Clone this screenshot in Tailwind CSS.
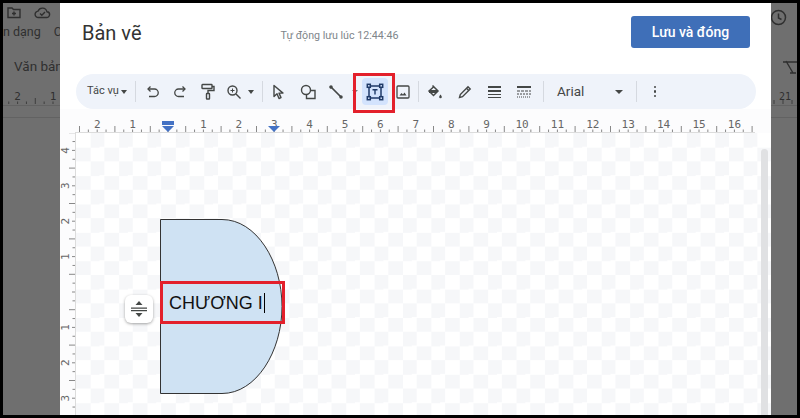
<!DOCTYPE html>
<html lang="en">
<head>
    <meta charset="UTF-8">
    <meta name="viewport" content="width=device-width, initial-scale=1.0">
    <title>Bản vẽ</title>
    <script src="https://cdn.jsdelivr.net/npm/@tailwindcss/browser@4"></script>
</head>
<body class="bg-black overflow-hidden font-['Roboto',sans-serif]">
    <div class="w-[800px] h-[418px] pt-[3px] pb-[3px] pl-[3px] pr-[3px] flex">
        <!-- Dimmed document behind the dialog -->
        <div class="w-[57px] shrink-0 bg-[#6f6f6f] text-[#2f2f2f] overflow-hidden flex flex-col">
            <div class="h-[18px] flex items-center gap-[12px] pl-[3px]">
                <svg width="16" height="14" viewBox="0 0 16 14" fill="none" stroke="#2f2f2f" stroke-width="1.4"><path d="M2 3h4l1.500 1.500H14v8H2z"/><path d="M8 6.500v4M6 8.500h4"/></svg>
                <svg width="17" height="13" viewBox="0 0 17 13" fill="none" stroke="#2f2f2f" stroke-width="1.4"><path d="M4.500 11.500a3.200 3.200 0 0 1-.4-6.400 4.600 4.600 0 0 1 8.800.6 2.900 2.900 0 0 1-.4 5.800z"/><path d="M6 7.500l1.800 1.700L11 6"/></svg>
            </div>
            <div class="h-[22px] flex items-center gap-[13px] text-[12.500px] whitespace-nowrap"><span>n dạng</span><span>C</span></div>
            <div class="h-[33px] flex items-end pl-[11px] text-[13.500px] whitespace-nowrap">Văn bản</div>
            <svg width="57" height="29" class="shrink-0" id="bgRulerLeft"></svg>
            <div class="h-[13px] shrink-0 border-t border-b border-[#626262]"></div>
        </div>

        <!-- Dialog -->
        <div class="relative w-[711px] shrink-0 bg-white flex flex-col">
            <div class="h-[71px] flex items-start shrink-0">
                <h1 class="mt-[17px] ml-[22px] text-[20px] leading-[26px] text-[#333]">Bản vẽ</h1>
                <span class="mt-[26px] ml-[139px] text-[10.700px] leading-[14px] text-[#80868b] whitespace-nowrap">Tự động lưu lúc 12:44:46</span>
                <button class="mt-[13px] ml-auto mr-[21px] w-[119px] h-[32px] rounded-[3px] bg-[#3f6fb8] text-white text-[14px] font-medium">Lưu và đóng</button>
            </div>

            <!-- Toolbar -->
            <div class="ml-[16px] w-[680px] h-[35px] shrink-0 rounded-full bg-[#eff3fa] flex items-center text-[#444746]">
                <div class="w-[59px] pl-[11px] flex items-center shrink-0 text-[11px] whitespace-nowrap">Tác vụ<span class="ml-[2px] border-x-[3.500px] border-x-transparent border-t-[4px] border-t-[#444746]"></span></div>
                <div class="w-px h-[21px] bg-[#d5d9e0] shrink-0"></div>
                <div class="w-[34px] flex justify-center shrink-0">
                    <svg width="14" height="14" viewBox="0 0 14 14" fill="none" stroke="#444746" stroke-width="1.300"><path d="M4.500 1.500L2 4l2.500 2.500"/><path d="M2 4h6.500a3 3 0 0 1 0 7.500H3"/></svg>
                </div>
                <div class="w-[20px] flex justify-center shrink-0">
                    <svg width="14" height="14" viewBox="0 0 14 14" fill="none" stroke="#444746" stroke-width="1.300"><path d="M9.500 1.500L12 4 9.500 6.500"/><path d="M12 4H5.500a3 3 0 0 0 0 7.500H11"/></svg>
                </div>
                <div class="w-[36px] flex justify-center shrink-0">
                    <svg width="14" height="17" viewBox="0 0 14 17" fill="none" stroke="#444746" stroke-width="1.400"><rect x="1" y="1.500" width="10" height="4" rx=".5"/><path d="M11 3.500h2v4H7v3"/><rect x="5.500" y="10.500" width="3" height="5.500" rx=".5"/></svg>
                </div>
                <div class="w-[16px] flex justify-center shrink-0">
                    <svg width="16" height="16" viewBox="0 0 16 16" fill="none" stroke="#444746" stroke-width="1.400"><circle cx="6.500" cy="6.500" r="4.500"/><path d="M10 10l4.500 4.500"/><path d="M4.500 6.500h4M6.500 4.500v4" stroke-width="1"/></svg>
                </div>
                <div class="w-[18px] flex justify-center shrink-0"><span class="border-x-[3.500px] border-x-transparent border-t-[4px] border-t-[#444746]"></span></div>
                <div class="w-px h-[21px] bg-[#d5d9e0] shrink-0 ml-[2px]"></div>
                <div class="w-[31px] flex justify-center shrink-0">
                    <svg width="13" height="16" viewBox="0 0 13 16" fill="none" stroke="#444746" stroke-width="1.400" stroke-linejoin="round"><path d="M2 1.500v11l3-2.800 2 4.800 2-.9-2-4.500h4z"/></svg>
                </div>
                <div class="w-[27px] flex justify-center shrink-0">
                    <svg width="16" height="16" viewBox="0 0 16 16" fill="none" stroke="#444746" stroke-width="1.400"><circle cx="6" cy="6" r="4.500"/><path d="M10.500 6.500H15v8H6.500v-4"/></svg>
                </div>
                <div class="w-[29px] flex justify-center shrink-0">
                    <svg width="14" height="14" viewBox="0 0 14 14" fill="none" stroke="#444746" stroke-width="1.700"><path d="M2 2l10 10"/><circle cx="2" cy="2" r=".9" fill="#444746"/><circle cx="12" cy="12" r=".9" fill="#444746"/></svg>
                </div>
                <div class="w-[10px] flex justify-center shrink-0 opacity-70"><span class="border-x-[3px] border-x-transparent border-t-[3px] border-t-[#444746]"></span></div>
                <div class="ml-[2px] w-[26px] h-[27px] rounded-[4px] bg-[#d3e3fd] flex justify-center items-center shrink-0">
                    <svg width="18" height="18" viewBox="0 0 18 18" fill="none" stroke="#1f3a68" stroke-width="1.500"><rect x="3" y="3" width="12" height="12"/><rect x="1.300" y="1.300" width="3" height="3" fill="#d3e3fd"/><rect x="13.700" y="1.300" width="3" height="3" fill="#d3e3fd"/><rect x="1.300" y="13.700" width="3" height="3" fill="#d3e3fd"/><rect x="13.700" y="13.700" width="3" height="3" fill="#d3e3fd"/><path d="M6.500 6.800h5M9 6.800v4.800" stroke-width="1.400"/></svg>
                </div>
                <div class="w-[30px] flex justify-center shrink-0">
                    <svg width="14" height="14" viewBox="0 0 14 14" fill="none" stroke="#444746" stroke-width="1.300"><rect x="1" y="1" width="12" height="12" rx="1"/><path d="M3.500 10.500l2-2.500 1.500 1.500 1.500-2 2 3z" fill="#444746" stroke="none"/></svg>
                </div>
                <div class="w-px h-[21px] bg-[#d5d9e0] shrink-0"></div>
                <div class="w-[31px] flex justify-center shrink-0">
                    <svg width="16" height="16" viewBox="0 0 16 16" fill="none" stroke="#444746" stroke-width="1.500"><path d="M5.500 1.500l5.500 5.500-4.500 4.500-4.500-4.500 4.500-4"/><path d="M2 7.500h8" stroke-width="3"/><path d="M13.500 10.500c.9 1.200 1.300 1.900 1.300 2.500a1.300 1.300 0 0 1-2.600 0c0-.6.400-1.300 1.300-2.500z" fill="#444746" stroke="none"/></svg>
                </div>
                <div class="w-[29px] flex justify-center shrink-0">
                    <svg width="14" height="14" viewBox="0 0 14 14" fill="none" stroke="#444746" stroke-width="1.400"><path d="M1.500 12.500l.8-3L10 1.800l2.200 2.200-7.700 7.700z"/><path d="M8.500 3.300l2.200 2.200"/></svg>
                </div>
                <div class="w-[30px] flex flex-col items-center shrink-0 gap-[2px]">
                    <div class="w-[13px] h-[2px] bg-[#444746]"></div><div class="w-[13px] h-[2px] bg-[#444746]"></div><div class="w-[13px] h-[1px] bg-[#444746]"></div><div class="w-[13px] h-[1px] bg-[#444746]"></div>
                </div>
                <div class="w-[29px] flex justify-center shrink-0">
                    <svg width="14" height="12" viewBox="0 0 14 12" fill="none" stroke="#444746"><path d="M0 1h14" stroke-width="2"/><path d="M0 5h14" stroke-width="1" stroke-dasharray="3 1"/><path d="M0 8h14" stroke-width="1" stroke-dasharray="2 1"/><path d="M0 11h14" stroke-width="1" stroke-dasharray="1 1"/></svg>
                </div>
                <div class="w-px h-[21px] bg-[#d5d9e0] shrink-0 ml-[5px]"></div>
                <div class="w-[92px] pl-[13px] pr-[13px] flex items-center justify-between shrink-0 text-[13.500px]">Arial<span class="border-x-[4px] border-x-transparent border-t-[4px] border-t-[#444746]"></span></div>
                <div class="w-px h-[21px] bg-[#d5d9e0] shrink-0"></div>
                <div class="w-[36px] flex flex-col items-center gap-[2px] shrink-0">
                    <div class="size-[2.500px] rounded-full bg-[#444746]"></div><div class="size-[2.500px] rounded-full bg-[#444746]"></div><div class="size-[2.500px] rounded-full bg-[#444746]"></div>
                </div>
            </div>

            <!-- Ruler + canvas -->
            <svg id="rulerTop" width="711" height="24" class="shrink-0 bg-[#fcfcfd]"></svg>
            <div class="flex-1 min-h-0 flex">
                <svg id="rulerLeft" width="16" height="282" class="shrink-0 bg-[#fcfcfd]"></svg>
                <div class="relative flex-1 bg-[conic-gradient(#f6f7f9_25%,#fff_0_50%,#f6f7f9_0_75%,#fff_0)] bg-size-[28.4px_28.4px]">
                    <div class="absolute left-[685px] top-[16px] bottom-0 w-[7px] rounded-t-full bg-[#e0e1e3]"></div>
                    <svg class="absolute left-[84px] top-[86px]" width="125" height="176" viewBox="0 0 125 176">
                        <path d="M.500.500H62C96 .500 122 42 122 87.500S96 174.500 62 174.500H.500Z" fill="#cfe2f3" stroke="#333" stroke-width="1"/>
                    </svg>
                    <div class="absolute left-[49px] top-[162px] size-[28px] rounded-[6px] bg-white shadow-[0_1px_3px_rgba(0,0,0,.35)] flex items-center justify-center">
                        <svg width="16" height="18" viewBox="0 0 16 18" fill="#444746"><path d="M8 1l3.500 4h-7zM8 17l-3.500-4h7z"/><path d="M0 7.500h16v1.200H0zM0 10h16v1.200H0z"/></svg>
                    </div>
                    <div class="absolute left-[84px] top-[148px] w-[125px] h-[43px] border-[3px] border-[#e3202b] flex items-center pl-[6px] pt-[1px] text-[18px] text-[#111] font-['Liberation_Sans',sans-serif] whitespace-nowrap">CHƯƠNG I<span class="ml-[1px] w-[1.500px] h-[20px] bg-black"></span></div>
                </div>
            </div>

            <!-- Highlight around the text box tool -->
            <div class="absolute left-[293px] top-[70px] w-[42px] h-[40px] border-[3px] border-[#e3202b]"></div>
        </div>

        <div class="flex-1 bg-[#6f6f6f] overflow-hidden flex flex-col text-[#2f2f2f]">
            <div class="h-[53px] pt-[6px]">
                <svg width="17" height="17" viewBox="0 0 17 17" fill="none" stroke="#2f2f2f" stroke-width="1.500" class="ml-[-1px]"><circle cx="8.500" cy="8.500" r="7"/><path d="M8.500 4.500v4.500l3 1.500"/></svg>
            </div>
            <div class="h-[33px] pt-[4px]">
                <svg width="14" height="14" viewBox="0 0 14 14" fill="none" stroke="#2f2f2f" stroke-width="1.400" class="ml-[12px]"><path d="M0 2h14M3 1l7 12M7 13h6"/></svg>
            </div>
            <svg id="bgRulerRight" width="26" height="16" class="shrink-0"></svg>
            <div class="h-[13px] shrink-0 border-t border-b border-[#626262]"></div>
        </div>
    </div>

    <script>
        // Ruler ticks are drawn from the same 35.4px-per-unit scale
        const UNIT = 35.4;
        const NS = 'http://www.w3.org/2000/svg';

        function add(svg, name, attrs, text) {
            const el = document.createElementNS(NS, name);
            Object.keys(attrs).forEach(k => el.setAttribute(k, attrs[k]));
            if (text) el.textContent = text;
            svg.appendChild(el);
        }

        function drawTop(svg, origin, base, from, to, color, labelColor) {
            for (let i = from; i <= to; i++) {
                const x = origin + i * UNIT / 4;
                const h = i % 2 === 0 && i % 4 !== 0 ? 6 : 2.500;
                add(svg, 'line', { x1: x, x2: x, y1: base, y2: base - h, stroke: color, 'stroke-width': 1 });
                if (i % 4 === 0 && i !== 0) {
                    add(svg, 'text', { x: x, y: base - 4, 'text-anchor': 'middle', 'font-size': 11, 'font-family': 'DejaVu Sans Mono', fill: labelColor }, String(Math.abs(i / 4)));
                }
            }
        }

        const rulerTop = document.getElementById('rulerTop');
        add(rulerTop, 'line', { x1: 15, x2: 695, y1: 23.500, y2: 23.500, stroke: '#dcdcdc', 'stroke-width': 1 });
        drawTop(rulerTop, 108, 23, -10, 66, '#888', '#666');
        // Indent markers
        add(rulerTop, 'path', { d: 'M102 12h12v4h-12zM102 17h12l-6 6z', fill: '#4472c4' });
        add(rulerTop, 'path', { d: 'M208 17h12l-6 6z', fill: '#4472c4' });

        const rulerLeft = document.getElementById('rulerLeft');
        add(rulerLeft, 'line', { x1: 15.500, x2: 15.500, y1: 0, y2: 282, stroke: '#dcdcdc', 'stroke-width': 1 });
        const originY = 292 - 133;
        for (let i = -18; i <= 18; i++) {
            const y = originY + i * UNIT / 4;
            const h = i % 4 === 0 ? 3 : (i % 2 === 0 ? 6 : 2.500);
            add(rulerLeft, 'line', { x1: 15, x2: 15 - h, y1: y, y2: y, stroke: '#888', 'stroke-width': 1 });
            if (i % 4 === 0 && i !== 0) {
                add(rulerLeft, 'text', { x: 0, y: 0, transform: `translate(9 ${y}) rotate(-90)`, 'text-anchor': 'middle', 'font-size': 11, 'font-family': 'DejaVu Sans Mono', fill: '#666' }, String(Math.abs(i / 4)));
            }
        }

        // Document rulers behind the dialog: "2" sits at x=18 and "1" at x=52
        drawTop(document.getElementById('bgRulerLeft'), 85.400, 28, -14, -2, '#3f3f3f', '#2f2f2f');
        const bgRight = document.getElementById('bgRulerRight');
        add(bgRight, 'text', { x: 14, y: 11, 'text-anchor': 'middle', 'font-size': 10, 'font-family': 'DejaVu Sans Mono', fill: '#2f2f2f' }, '21');
        [3, 12, 21].forEach(x => add(bgRight, 'line', { x1: x, x2: x, y1: 15, y2: 11, stroke: '#3f3f3f', 'stroke-width': 1 }));
    </script>
</body>
</html>
